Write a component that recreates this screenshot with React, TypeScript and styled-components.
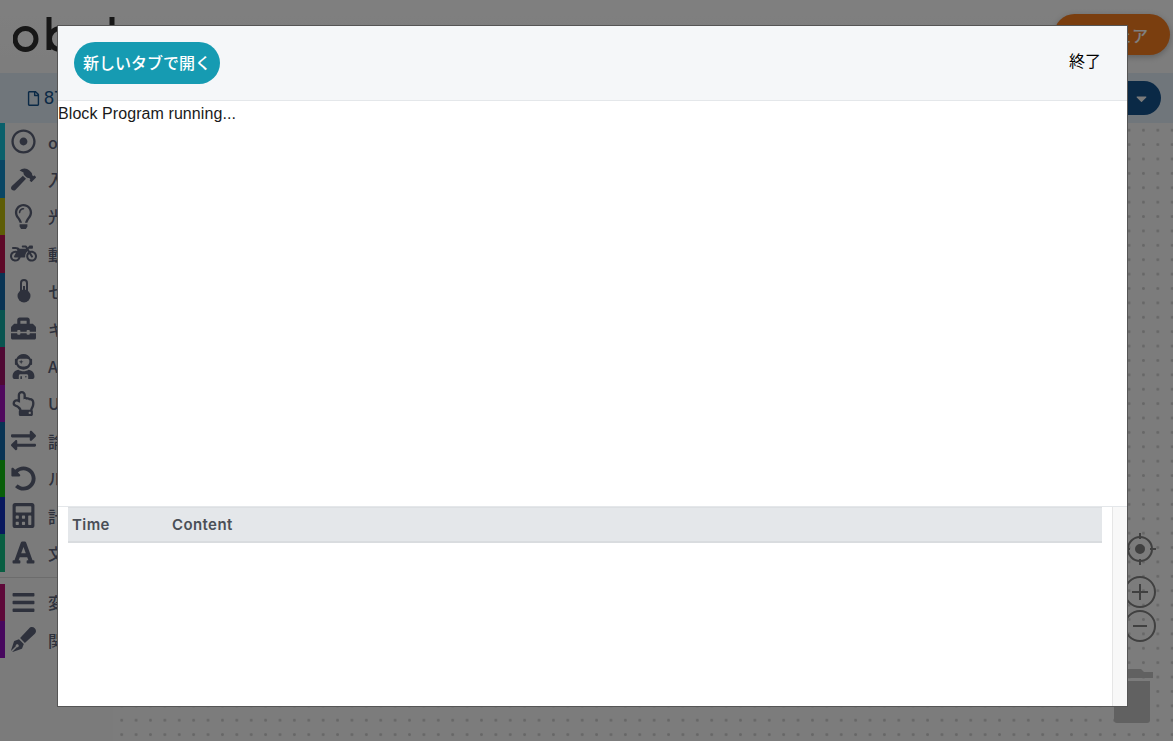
import React from "react";
import styled, { createGlobalStyle } from "styled-components";
import {
  FaRegDotCircle,
  FaHammer,
  FaRegLightbulb,
  FaMotorcycle,
  FaToolbox,
  FaUserAstronaut,
  FaRegHandPointUp,
  FaExchangeAlt,
  FaUndoAlt,
  FaCalculator,
  FaFont,
  FaBars,
  FaPenFancy,
  FaRegFile,
  FaCaretDown,
} from "react-icons/fa";

const GlobalStyle = createGlobalStyle`
  html, body {
    margin: 0;
    padding: 0;
    height: 100%;
    overflow: hidden;
    font-family: "Liberation Sans", "Noto Sans CJK JP", sans-serif;
  }
`;

const Page = styled.div`
  width: 100vw;
  height: 100vh;
  display: flex;
  flex-direction: column;
  background-color: #f8f8f8;
`;

const Header = styled.header`
  height: 73px;
  flex: none;
  display: flex;
  align-items: flex-start;
  justify-content: space-between;
  padding: 14px 3px 0 13px;
  background: linear-gradient(#fff, #fafafa);
  box-sizing: border-box;
`;

const LogoMark = styled.svg`
  width: 104px;
  height: 42px;
  fill: none;
  stroke: #2e2e2e;
  stroke-width: 5;
`;

const ShareButton = styled.button`
  width: 116px;
  height: 41px;
  border: none;
  border-radius: 21px;
  display: flex;
  align-items: center;
  justify-content: flex-end;
  padding: 0 22px 0 0;
  background: #f57c1f;
  color: #fff;
  font-family: "Noto Sans CJK JP", sans-serif;
  font-size: 16px;
  font-weight: 500;
  box-shadow: 0 2px 6px rgba(0, 0, 0, 0.25);
`;

const Toolbar = styled.div`
  height: 50px;
  flex: none;
  display: flex;
  align-items: center;
  justify-content: space-between;
  padding: 0 12px 0 26px;
  background: #e0ecf6;
  box-sizing: border-box;
  color: #14528c;
  font-size: 18px;
`;

const FileName = styled.div`
  display: flex;
  align-items: center;
  gap: 3px;

  svg {
    font-size: 15px;
  }
`;

const MenuButton = styled.div`
  width: 70px;
  height: 34px;
  border-radius: 17px;
  display: flex;
  align-items: center;
  justify-content: flex-end;
  padding-right: 11px;
  box-sizing: border-box;
  background: #14528c;
  color: #f4f4f4;
  font-size: 17px;
`;

const Main = styled.div`
  flex: 1;
  display: flex;
  min-height: 0;
`;

const Sidebar = styled.nav`
  width: 113px;
  flex: none;
  background: #f6f6f6;
`;

const Category = styled.div<{ $color: string }>`
  height: 37.4px;
  display: flex;
  align-items: center;
  gap: 11px;
  border-left: 5px solid ${(p) => p.$color};
  padding-left: 5px;
  color: #5c6378;
  font-family: "Noto Sans CJK JP", sans-serif;
  font-size: 16px;
  font-weight: 500;
  white-space: nowrap;
`;

const CategoryIcon = styled.span<{ $size?: number }>`
  width: 27px;
  height: 26px;
  display: flex;
  align-items: center;
  justify-content: center;
  font-size: ${(p) => p.$size ?? 25}px;
`;

const Separator = styled.div`
  height: 5px;
  margin-bottom: 6px;
  border-bottom: 1px solid #d8d8d8;
  box-sizing: content-box;
`;

const Canvas = styled.div`
  flex: 1;
  position: relative;
  background-color: #f8f8f8;
  background-image: radial-gradient(circle, #cfcfcf 1.2px, transparent 1.6px);
  background-size: 14.4px 14.4px;
  background-position: 1.5px 0;
`;

const ControlIcon = styled.svg<{ $top: number }>`
  position: absolute;
  left: 1009px;
  top: ${(p) => p.$top}px;
  width: 36px;
  height: 36px;
  fill: none;
  stroke: #808080;
  stroke-width: 2;
`;

const Trash = styled.svg`
  position: absolute;
  left: 998px;
  top: 539px;
  width: 42px;
  height: 62px;
  fill: #c2c2c2;
`;

const Overlay = styled.div`
  position: fixed;
  inset: 0;
  background: rgba(0, 0, 0, 0.5);
  backdrop-filter: blur(0.6px);
  display: flex;
  align-items: flex-start;
  padding: 25px 0 0 57px;
  box-sizing: border-box;
`;

const Modal = styled.div`
  width: 1071px;
  height: 682px;
  display: flex;
  flex-direction: column;
  background: #fff;
  border: 1px solid #555;
  box-sizing: border-box;
`;

const ModalHeader = styled.div`
  height: 74px;
  flex: none;
  display: flex;
  align-items: center;
  justify-content: space-between;
  padding: 0 26px 0 16px;
  background: #f5f7f9;
  border-bottom: 1px solid #e4e7ea;
  box-sizing: content-box;
`;

const OpenButton = styled.button`
  height: 42px;
  width: 146px;
  padding: 0 0 3px;
  border: none;
  border-radius: 21px;
  background: #169bb2;
  color: #fff;
  font-family: "Noto Sans CJK JP", sans-serif;
  font-size: 16px;
  font-weight: 500;
`;

const CloseLink = styled.span`
  color: #000;
  font-family: "Noto Sans CJK JP", sans-serif;
  font-size: 16px;
  margin-bottom: 7px;
`;

const Preview = styled.div`
  height: 404px;
  padding-top: 1px;
  flex: none;
  color: #1a1a1a;
  font-size: 16px;
  line-height: 24px;
  letter-spacing: 0.08px;
`;

const ConsoleArea = styled.div`
  flex: 1;
  display: flex;
  min-height: 0;
  border-top: 1px solid #e4e7ea;
`;

const LogPane = styled.div`
  flex: 1;
  padding: 0 10px;
`;

const LogHeader = styled.div`
  height: 36px;
  display: flex;
  align-items: center;
  padding-left: 4px;
  background: #e4e7ea;
  border-top: 1px solid #dcdfe2;
  border-bottom: 2px solid #d9dcdf;
  box-sizing: border-box;
  color: #4a4f57;
  font-family: Inter, sans-serif;
  font-size: 15px;
  font-weight: 600;
  letter-spacing: 0.4px;
`;

const LogColumn = styled.span<{ $width?: number }>`
  width: ${(p) => (p.$width ? `${p.$width}px` : "auto")};
`;

const Scrollbar = styled.div`
  width: 14px;
  flex: none;
  background: #f8f8f8;
  border-left: 1px solid #e6e6e6;
`;

function ThermometerIcon() {
  return (
    <svg width="14" height="24" viewBox="0 0 14 24">
      <path
        d="M4 12V4a3 3 0 0 1 6 0v8"
        fill="none"
        stroke="currentColor"
        strokeWidth="2"
      />
      <path d="M6 7h2v6h-2z" fill="currentColor" />
      <circle cx="7" cy="17" r="6.5" fill="currentColor" />
    </svg>
  );
}

const categories = [
  { icon: <FaRegDotCircle />, label: "obniz", color: "#14c0d6" },
  { icon: <FaHammer />, label: "入出力", color: "#128cc8" },
  { icon: <FaRegLightbulb />, label: "光", color: "#bcba0c" },
  { icon: <FaMotorcycle />, label: "動き", color: "#bc1250", size: 31 },
  { icon: <ThermometerIcon />, label: "センサー", color: "#1268a8" },
  { icon: <FaToolbox />, label: "キット", color: "#12a8a0" },
  { icon: <FaUserAstronaut />, label: "AI", color: "#a01268" },
  { icon: <FaRegHandPointUp />, label: "UI", color: "#a012bc" },
  { icon: <FaExchangeAlt />, label: "論理", color: "#1268a8" },
  { icon: <FaUndoAlt />, label: "ループ", color: "#12bc12" },
  { icon: <FaCalculator />, label: "計算", color: "#1230bc" },
  { icon: <FaFont />, label: "文字列", color: "#12bc84" },
];

const variables = [
  { icon: <FaBars />, label: "変数", color: "#bc1272" },
  { icon: <FaPenFancy />, label: "関数", color: "#8e0ebc" },
];

export default function App() {
  return (
    <Page>
      <GlobalStyle />
      <Header>
        <LogoMark viewBox="0 0 104 42" aria-label="obniz">
          <circle cx="12.5" cy="25" r="10.5" />
          <circle cx="47" cy="25" r="10.5" />
          <path d="M36 3v33M99 3v33" />
        </LogoMark>
        <ShareButton>シェア</ShareButton>
      </Header>
      <Toolbar>
        <FileName>
          <FaRegFile />
          <span>87</span>
        </FileName>
        <MenuButton>
          <FaCaretDown />
        </MenuButton>
      </Toolbar>
      <Main>
        <Sidebar>
          {categories.map((c) => (
            <Category key={c.label} $color={c.color}>
              <CategoryIcon $size={c.size}>{c.icon}</CategoryIcon>
              {c.label}
            </Category>
          ))}
          <Separator />
          {variables.map((c) => (
            <Category key={c.label} $color={c.color}>
              <CategoryIcon>{c.icon}</CategoryIcon>
              {c.label}
            </Category>
          ))}
        </Sidebar>
        <Canvas>
          <ControlIcon $top={408} viewBox="0 0 36 36">
            <circle cx="18" cy="18" r="12" />
            <circle cx="18" cy="18" r="4" fill="#808080" />
            <path d="M18 2v6M18 28v6M2 18h6M28 18h6" />
          </ControlIcon>
          <ControlIcon $top={451} viewBox="0 0 36 36">
            <circle cx="18" cy="18" r="15" />
            <path d="M18 10v16M10 18h16" />
          </ControlIcon>
          <ControlIcon $top={485} viewBox="0 0 36 36">
            <circle cx="18" cy="18" r="15" />
            <path d="M11 18h14" />
          </ControlIcon>
          <Trash viewBox="0 0 42 62">
            <path d="M0 10h42v6H0zM16 7h14l3 3H16z" />
            <path d="M3 19h36v39a3 3 0 0 1-3 3H6a3 3 0 0 1-3-3z" />
          </Trash>
        </Canvas>
      </Main>
      <Overlay>
        <Modal>
          <ModalHeader>
            <OpenButton>新しいタブで開く</OpenButton>
            <CloseLink>終了</CloseLink>
          </ModalHeader>
          <Preview>Block Program running...</Preview>
          <ConsoleArea>
            <LogPane>
              <LogHeader>
                <LogColumn $width={100}>Time</LogColumn>
                <LogColumn>Content</LogColumn>
              </LogHeader>
            </LogPane>
            <Scrollbar />
          </ConsoleArea>
        </Modal>
      </Overlay>
    </Page>
  );
}
